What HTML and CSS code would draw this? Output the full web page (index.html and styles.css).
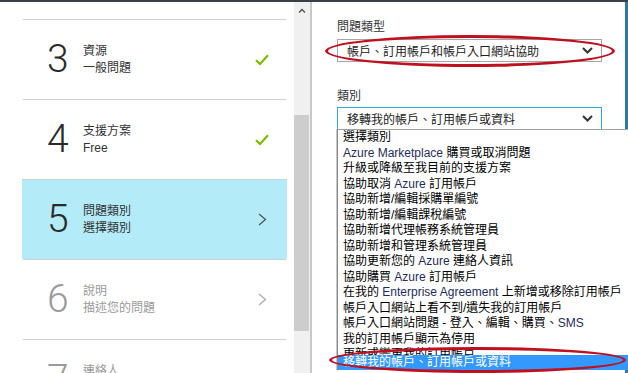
FILE: index.html
```html
<!DOCTYPE html>
<html lang="zh-Hant">
<head>
<meta charset="utf-8">
<title>支援要求</title>
<link rel="stylesheet" href="styles.css">
</head>
<body>
<div class="app">
  <aside class="steps-pane">
    <div class="steps">
      <div class="step">
        <span class="num">3</span>
        <div class="txt"><div>資源</div><div>一般問題</div></div>
        <svg class="icon" width="14" height="12" viewBox="0 0 14 12"><path d="M1 6.2 L5 10 L13 1.2" fill="none" stroke="#7fba00" stroke-width="2.2"/></svg>
      </div>
      <div class="step">
        <span class="num">4</span>
        <div class="txt"><div>支援方案</div><div>Free</div></div>
        <svg class="icon" width="14" height="12" viewBox="0 0 14 12"><path d="M1 6.2 L5 10 L13 1.2" fill="none" stroke="#7fba00" stroke-width="2.2"/></svg>
      </div>
      <div class="step active">
        <span class="num">5</span>
        <div class="txt"><div>問題類別</div><div>選擇類別</div></div>
        <svg class="icon" width="9" height="13" viewBox="0 0 9 13"><path d="M1 1 L7.5 6.5 L1 12" fill="none" stroke="#505050" stroke-width="1.2"/></svg>
      </div>
      <div class="step muted">
        <span class="num">6</span>
        <div class="txt"><div>說明</div><div>描述您的問題</div></div>
        <svg class="icon" width="9" height="13" viewBox="0 0 9 13"><path d="M1 1 L7.5 6.5 L1 12" fill="none" stroke="#a8a8a8" stroke-width="1.2"/></svg>
      </div>
      <div class="step muted">
        <span class="num">7</span>
        <div class="txt"><div>連絡人</div><div>&nbsp;</div></div>
      </div>
    </div>
  </aside>

  <div class="scrollbar">
    <div class="sb-arrow">
      <svg width="8" height="5" viewBox="0 0 8 5"><path d="M1 4.5 L4 1.5 L7 4.5" fill="none" stroke="#5a5a5a" stroke-width="1.5"/></svg>
    </div>
    <div class="sb-thumb"></div>
  </div>

  <main class="form">
    <div class="field-label">問題類型</div>
    <div class="select">
      <span>帳戶、訂用帳戶和帳戶入口網站協助</span>
      <svg class="chev" width="11" height="7" viewBox="0 0 11 7"><path d="M1 1 L5.5 5.5 L10 1" fill="none" stroke="#333" stroke-width="2"/></svg>
    </div>

    <div class="field-label second">類別</div>
    <div class="select focused">
      <span>移轉我的帳戶、訂用帳戶或資料</span>
      <svg class="chev" width="11" height="7" viewBox="0 0 11 7"><path d="M1 1 L5.5 5.5 L10 1" fill="none" stroke="#333" stroke-width="2"/></svg>

      <ul class="listbox">
        <li>選擇類別</li>
        <li><span class="en">Azure Marketplace</span> 購買或取消問題</li>
        <li>升級或降級至我目前的支援方案</li>
        <li>協助取消 <span class="en">Azure</span> 訂用帳戶</li>
        <li>協助新增/編輯採購單編號</li>
        <li>協助新增/編輯課稅編號</li>
        <li>協助新增代理帳務系統管理員</li>
        <li>協助新增和管理系統管理員</li>
        <li>協助更新您的 <span class="en">Azure</span> 連絡人資訊</li>
        <li>協助購買 <span class="en">Azure</span> 訂用帳戶</li>
        <li>在我的 <span class="en">Enterprise Agreement</span> 上新增或移除訂用帳戶</li>
        <li>帳戶入口網站上看不到/遺失我的訂用帳戶</li>
        <li>帳戶入口網站問題 - 登入、編輯、購買、<span class="en">SMS</span></li>
        <li>我的訂用帳戶顯示為停用</li>
        <li class="clipped">更新或變更我的訂用帳戶</li>
        <li class="selected">移轉我的帳戶、訂用帳戶或資料</li>
      </ul>
    </div>

    <div class="ring ring-top"></div>
    <div class="ring ring-bottom"></div>
  </main>

  <div class="edge"></div>
</div>
</body>
</html>
```

FILE: styles.css
```css
* { box-sizing: border-box; }

html, body {
  margin: 0;
  padding: 0;
  height: 373px;
  overflow: hidden;
  background: #ffffff;
}

body {
  font-family: "Liberation Sans", "Noto Sans CJK TC", sans-serif;
  font-size: 12px;
  color: #222;
  border-top: 2px solid #3a3f46;
}

.app {
  display: flex;
  height: 371px;
}

/* ---------- left steps pane ---------- */
.steps-pane {
  width: 294px;
  flex: none;
  overflow: hidden;
  background: #fff;
}

.steps {
  padding: 17px 7px 0 22px;
}

.step {
  display: grid;
  grid-template-columns: 36px 1fr 14px;
  align-items: center;
  height: 80px;
  border-top: 1px solid #d0d0d0;
  padding: 0 17px 0 24px;
  margin-left: 1px;
  margin-right: 1px;
}

.step.active {
  background: #b3ebf8;
  border-top-color: #c8d4d8;
  margin-left: 0;
  margin-right: 0;
  padding-left: 25px;
  padding-right: 18px;
}

.num {
  font-family: "Roboto", "Liberation Sans", sans-serif;
  font-weight: 300;
  font-size: 39px;
  line-height: 40px;
  color: #2a2a2a;
  margin-top: -1px;
}

.txt {
  line-height: 17px;
  color: #333;
  margin-top: 1px;
}

.icon { justify-self: center; }

.step.muted .num,
.step.muted .txt { color: #9a9a9a; }

/* ---------- scrollbar ---------- */
.scrollbar {
  width: 16px;
  flex: none;
  background: #f0f0f0;
  display: flex;
  flex-direction: column;
}

.sb-arrow {
  height: 17px;
  display: flex;
  align-items: center;
  justify-content: center;
  padding-right: 1px;
}

.sb-thumb {
  width: 15px;
  height: 216px;
  margin-top: 96px;
  background: #cdcdcd;
}

/* ---------- right form ---------- */
.form {
  position: relative;
  flex: 1;
  border-left: 2px solid #c8c8c8;
  padding: 17px 0 0 25px;
  background: #fff;
}

.field-label {
  line-height: 16px;
  color: #333;
  margin-bottom: 4px;
}

.field-label.second {
  margin-top: 26px;
  margin-bottom: 3px;
}

.select {
  position: relative;
  width: 265px;
  height: 23px;
  border: 1px solid #a6a6a6;
  display: flex;
  align-items: center;
  justify-content: space-between;
  padding: 0 8px 0 9px;
  color: #222;
  background: #fff;
}

.select.focused { border-color: #2aaee0; }

.chev { flex: none; }

.listbox {
  position: absolute;
  top: 21px;
  left: -1px;
  width: 300px;
  margin: 0;
  padding: 0;
  list-style: none;
  background: #fff;
  border-top: 1px solid #a0a0a0;
  border-left: 1px solid #8a8a8a;
  box-shadow: -1px 0 0 #c8c8c8;
  color: #000;
}

.listbox li {
  height: 15.5px;
  line-height: 15.5px;
  padding-left: 5px;
  white-space: nowrap;
  overflow: hidden;
}

.listbox .en { color: #1f2d5c; }

.listbox li.clipped { height: 8px; line-height: 15.5px; }

.listbox li.selected {
  height: 15px;
  line-height: 15px;
  background: #3399ff;
  color: #fff;
}

/* annotation rings */
.ring {
  position: absolute;
  border: 3px solid #bf1020;
  border-radius: 50%;
}

.ring-top {
  left: 13px;
  top: 33px;
  width: 290px;
  height: 32px;
}

.ring-bottom {
  left: 17px;
  top: 345px;
  width: 297px;
  height: 26px;
}

/* right blue edge */
.edge {
  width: 3px;
  flex: none;
  background: #2f78a3;
}
```
